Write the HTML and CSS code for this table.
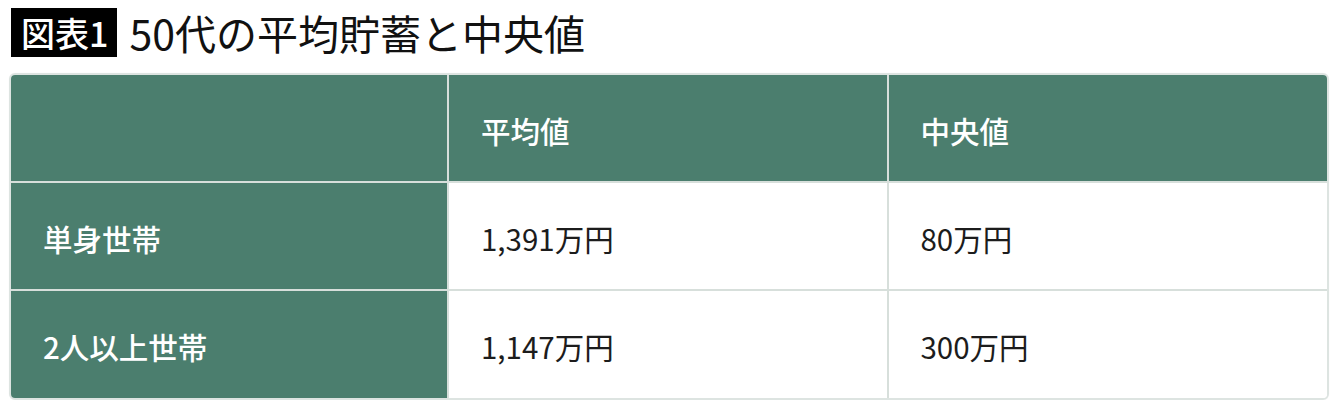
FILE: index.html
```html
<!DOCTYPE html>
<html lang="ja">
<head>
<meta charset="utf-8">
<link rel="stylesheet" href="styles.css">
</head>
<body>
<div class="page">
  <h1 class="title"><span class="badge">図表1</span><span class="title-text">50代の平均貯蓄と中央値</span></h1>
  <div class="table-wrap">
    <table class="data">
      <thead>
        <tr><th class="corner"></th><th>平均値</th><th>中央値</th></tr>
      </thead>
      <tbody>
        <tr><th>単身世帯</th><td>1,391万円</td><td>80万円</td></tr>
        <tr><th>2人以上世帯</th><td>1,147万円</td><td>300万円</td></tr>
      </tbody>
    </table>
  </div>
</div>
</body>
</html>
```

FILE: styles.css
```css
html, body {
  margin: 0;
  padding: 0;
  background: #ffffff;
}
body {
  font-family: "Noto Sans CJK JP", "Noto Sans", sans-serif;
  color: #1a1a1a;
}
.page {
  padding: 8px 11px 0 9px;
}
.title {
  margin: 0 0 0 2px;
  display: flex;
  align-items: center;
  gap: 12px;
  font-weight: 400;
  height: 49px;
}
.badge {
  background: #000;
  color: #fff;
  font-size: 34px;
  font-weight: 500;
  line-height: 49px;
  padding: 0 9px 0 10px;
  height: 49px;
  letter-spacing: 0;
}
.title-text {
  font-size: 41px;
  line-height: 49px;
  font-weight: 400;
  letter-spacing: 0;
  color: #111;
}
.table-wrap {
  margin-top: 16px;
  border: 2px solid #dde4e1;
  border-radius: 6px;
  overflow: hidden;
  width: 1316px;
  box-shadow: 0 0 1px rgba(0,0,0,0.08);
}
.data {
  width: 100%;
  border-collapse: collapse;
  table-layout: fixed;
}
.data th, .data td {
  height: 108px;
  box-sizing: border-box;
  padding: 0 32px;
  text-align: left;
  font-size: 29.5px;
  vertical-align: middle;
  border: 2px solid #d7dfdb;
}
.data tr:first-child > * { border-top: none; }
.data tr > *:first-child { border-left: none; }
.data tr > *:last-child { border-right: none; }
.data tbody tr:last-child > * { border-bottom: none; }
.data thead th {
  background: #4b7e6e;
  color: #fff;
  font-weight: 500;
  height: 107px;
  padding-top: 4px;
}
.data tbody th {
  background: #4b7e6e;
  color: #fff;
  font-weight: 500;
  width: 437px;
}
.data tbody td, .data tbody th {
  padding-top: 3px;
}
.data .corner { width: 437px; }
.data td {
  background: #fff;
  color: #1c1c1c;
  font-weight: 400;
}
```
